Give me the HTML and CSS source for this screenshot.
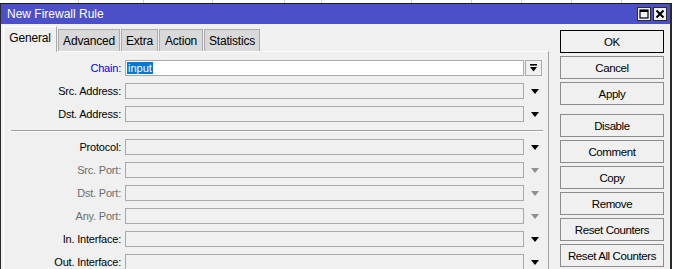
FILE: index.html
```html
<!DOCTYPE html>
<html>
<head>
<meta charset="utf-8">
<link rel="stylesheet" href="styles.css">
</head>
<body>
<div class="backdrop">
  <span class="col c1"></span><span class="col c2"></span><span class="col c3"></span><span class="col c4"></span><span class="col c5"></span><span class="col c6"></span><span class="col c7"></span><span class="col c8"></span><span class="col c9"></span><span class="col c10"></span>
</div>
<div class="window">
  <div class="titlebar">
    <span class="title">New Firewall Rule</span>
    <div class="tb-btns">
      <span class="tb-btn"><svg width="12" height="12" viewBox="0 0 12 12"><rect x="2" y="2" width="8" height="8" fill="none" stroke="#000" stroke-width="1.2"/><rect x="2" y="2" width="8" height="2" fill="#000"/></svg></span>
      <span class="tb-btn"><svg width="12" height="12" viewBox="0 0 12 12"><path d="M2.5 2.5 L9.5 9.5 M9.5 2.5 L2.5 9.5" stroke="#000" stroke-width="2"/></svg></span>
    </div>
  </div>
  <div class="body">
    <div class="main">
      <div class="tabs">
        <span class="tab active">General</span>
        <span class="tab t-adv">Advanced</span>
        <span class="tab t-extra">Extra</span>
        <span class="tab t-action">Action</span>
        <span class="tab t-stats">Statistics</span>
      </div>
      <div class="panel">
        <div class="row">
          <span class="label blue">Chain:</span>
          <span class="field white"><span class="sel">input</span></span>
          <span class="ddbtn"><svg width="7" height="8" viewBox="0 0 7 8"><rect x="0" y="0" width="7" height="1.6" fill="#000"/><polygon points="0,3 7,3 3.5,7.5" fill="#000"/></svg></span>
        </div>
        <div class="row">
          <span class="label">Src. Address:</span>
          <span class="field"></span>
          <span class="arrowbox"><span class="arrow"></span></span>
        </div>
        <div class="row">
          <span class="label">Dst. Address:</span>
          <span class="field"></span>
          <span class="arrowbox"><span class="arrow"></span></span>
        </div>
        <div class="sep"></div>
        <div class="row">
          <span class="label">Protocol:</span>
          <span class="field"></span>
          <span class="arrowbox"><span class="arrow"></span></span>
        </div>
        <div class="row">
          <span class="label dis">Src. Port:</span>
          <span class="field"></span>
          <span class="arrowbox"><span class="arrow dis"></span></span>
        </div>
        <div class="row">
          <span class="label dis">Dst. Port:</span>
          <span class="field"></span>
          <span class="arrowbox"><span class="arrow dis"></span></span>
        </div>
        <div class="row">
          <span class="label dis">Any. Port:</span>
          <span class="field"></span>
          <span class="arrowbox"><span class="arrow dis"></span></span>
        </div>
        <div class="row">
          <span class="label">In. Interface:</span>
          <span class="field"></span>
          <span class="arrowbox"><span class="arrow"></span></span>
        </div>
        <div class="row">
          <span class="label">Out. Interface:</span>
          <span class="field"></span>
          <span class="arrowbox"><span class="arrow"></span></span>
        </div>
      </div>
    </div>
    <div class="buttons">
      <span class="btn default">OK</span>
      <span class="btn">Cancel</span>
      <span class="btn">Apply</span>
      <span class="btn spaced">Disable</span>
      <span class="btn">Comment</span>
      <span class="btn">Copy</span>
      <span class="btn">Remove</span>
      <span class="btn">Reset Counters</span>
      <span class="btn">Reset All Counters</span>
    </div>
  </div>
</div>
</body>
</html>
```

FILE: styles.css
```css
html, body {
  margin: 0;
  padding: 0;
  background: #ffffff;
  overflow: hidden;
}
body {
  font-family: "Liberation Sans", Arial, sans-serif;
  font-size: 11px;
  color: #000;
  width: 675px;
  height: 269px;
}
.backdrop {
  height: 3px;
  display: flex;
  background: #fff;
}
.col {
  border-right: 1px solid #d4d4d4;
}
.c1 { width: 78px; }
.c2 { width: 64px; }
.c3 { width: 68px; }
.c4 { width: 71px; }
.c5 { width: 36px; }
.c6 { width: 89px; }
.c7 { width: 59px; }
.c8 { width: 49px; }
.c9 { width: 49px; }
.c10 { width: 49px; }

.window {
  width: 669px;
  height: 266px;
  border-top: 1px solid #1a1a1a;
  border-left: 1px solid #2a2a2a;
  border-right: 2px solid #2a2a2a;
  background: #f0f0f0;
  display: flex;
  flex-direction: column;
}
.titlebar {
  height: 21px;
  background: #4c50c8;
  display: flex;
  align-items: center;
  justify-content: space-between;
  padding-left: 6px;
  padding-right: 3px;
}
.title {
  color: #fff;
  font-size: 12px;
}
.tb-btns {
  display: flex;
  gap: 2px;
}
.tb-btn {
  width: 12px;
  height: 12px;
  border: 1px solid #2a2a2a;
  background: #f0f0f0;
  display: flex;
}
.body {
  display: flex;
  flex: 1;
}
.main {
  margin-left: 2px;
  width: 546px;
  display: flex;
  flex-direction: column;
}
.tabs {
  display: flex;
  align-items: flex-end;
  height: 25px;
  margin-top: 2px;
  position: relative;
  z-index: 1;
}
.tab {
  height: 22px;
  box-sizing: border-box;
  background: #d9d9d9;
  border: 1px solid #ababab;
  border-bottom: none;
  display: flex;
  align-items: center;
  justify-content: center;
  font-size: 12px;
  letter-spacing: -0.2px;
  margin-right: 1px;
}
.tab.active {
  height: 26px;
  margin-bottom: -1px;
  background: #f0f0f0;
  border-color: #fff;
  border-right-color: #ababab;
  width: 54px;
  padding-bottom: 3px;
}
.t-adv { width: 62px; }
.t-extra { width: 37px; }
.t-action { width: 44px; }
.t-stats { width: 56px; }

.panel {
  flex: 1;
  border-top: 1px solid #fff;
  border-left: 1px solid #fff;
  border-right: 1px solid #a0a0a0;
  padding-top: 8px;
  display: flex;
  flex-direction: column;
  gap: 7px;
}
.row {
  display: flex;
  align-items: center;
  height: 16px;
}
.label {
  width: 117px;
  text-align: right;
  margin-right: 4px;
  letter-spacing: -0.2px;
}
.label.blue { color: #0000ff; }
.label.dis { color: #6d6d6d; }
.field {
  width: 399px;
  height: 16px;
  box-sizing: border-box;
  border: 1px solid #a9a9a9;
  background: #f0f0f0;
  display: flex;
  align-items: center;
}
.field.white {
  background: #fff;
}
.sel {
  background: #0078d7;
  color: #fff;
  margin-left: 1px;
  padding: 0 1px;
  line-height: 12px;
}
.ddbtn {
  margin-left: 1px;
  width: 17px;
  height: 16px;
  box-sizing: border-box;
  border: 1px solid #a9a9a9;
  background: #f0f0f0;
  display: flex;
  align-items: center;
  justify-content: center;
}
.arrowbox {
  width: 22px;
  display: flex;
  justify-content: center;
}
.arrow {
  width: 0;
  height: 0;
  border-left: 4.5px solid transparent;
  border-right: 4.5px solid transparent;
  border-top: 5px solid #000;
}
.arrow.dis {
  border-top-color: #8f8f8f;
}
.sep {
  margin: 1px 5px 0 7px;
  height: 0;
  border-top: 1px solid #a0a0a0;
  border-bottom: 1px solid #fff;
}
.buttons {
  margin-left: 11px;
  margin-top: 6px;
  display: flex;
  flex-direction: column;
  gap: 3px;
  width: 104px;
}
.btn {
  height: 23px;
  box-sizing: border-box;
  border: 1px solid #8c8c8c;
  background: #f0f0f0;
  display: flex;
  align-items: center;
  justify-content: center;
  font-size: 11.5px;
  letter-spacing: -0.4px;
}
.btn.default {
  border-color: #000;
}
.btn.spaced {
  margin-top: 6px;
}
```
